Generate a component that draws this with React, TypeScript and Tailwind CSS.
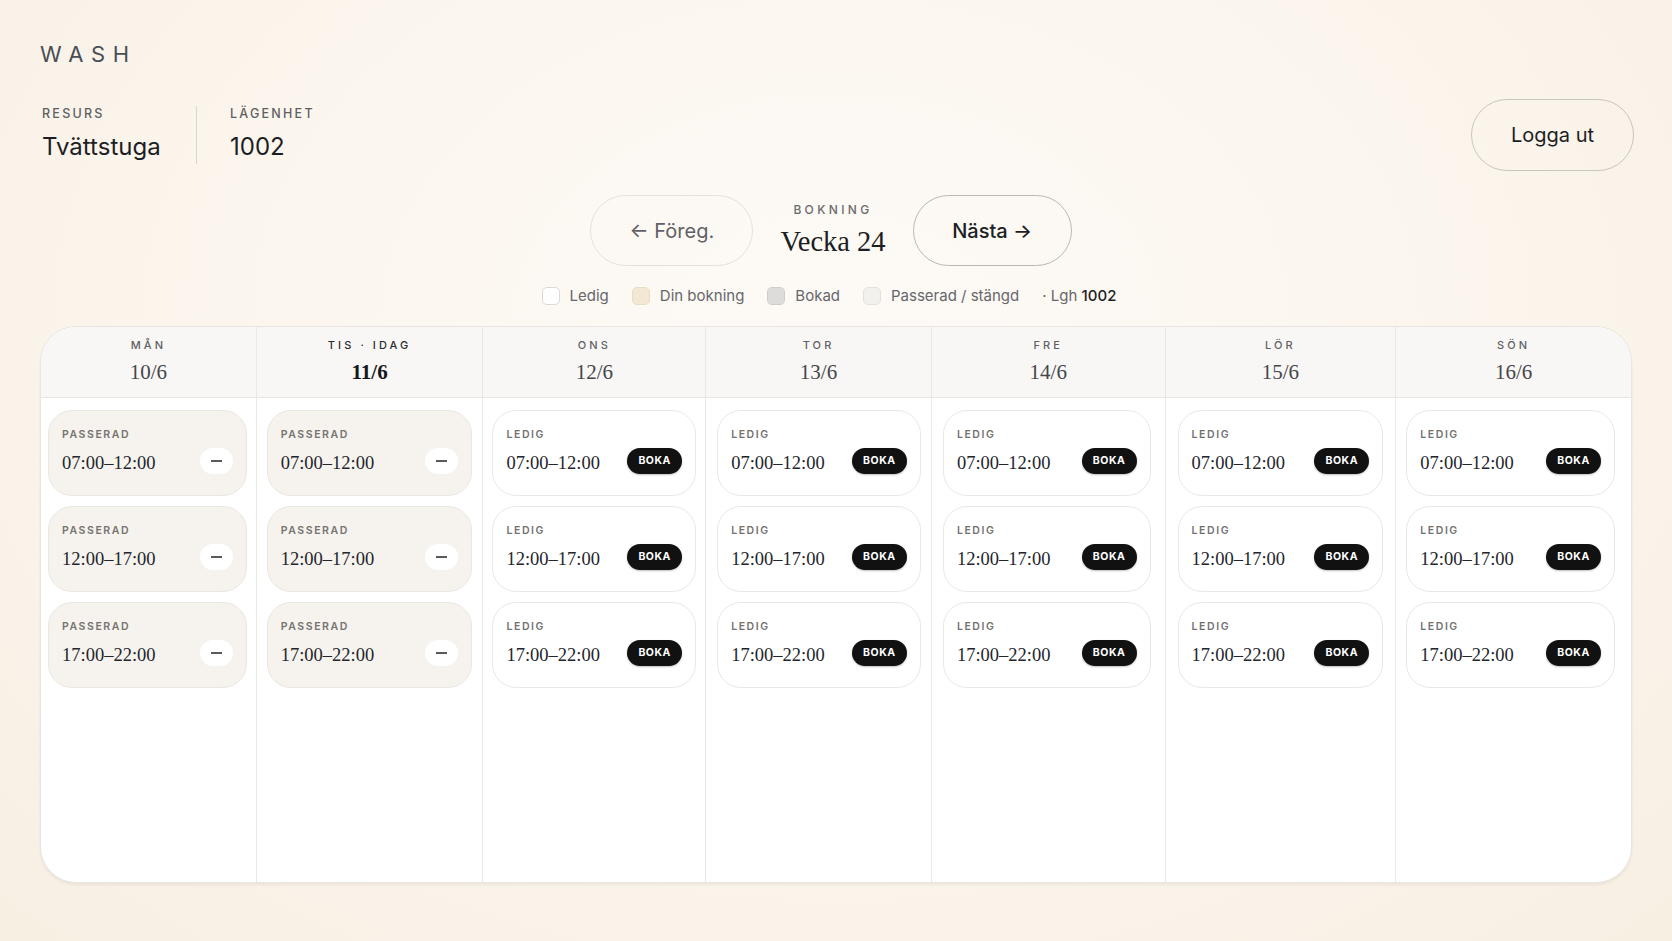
import React from "react";

type Day = {
    label: string;
    date: string;
    past: boolean;
    today?: boolean;
    pad: string; // body padding, the cards don't sit evenly in every column
};

const days: Day[] = [
    { label: "MÅN", date: "10/6", past: true, pad: "pl-[7px] pr-[9px]" },
    { label: "TIS · IDAG", date: "11/6", past: true, today: true, pad: "pl-[10px] pr-[10px]" },
    { label: "ONS", date: "12/6", past: false, pad: "pl-[9px] pr-[9px]" },
    { label: "TOR", date: "13/6", past: false, pad: "pl-[11px] pr-[10px]" },
    { label: "FRE", date: "14/6", past: false, pad: "pl-[11px] pr-[14px]" },
    { label: "LÖR", date: "15/6", past: false, pad: "pl-[12px] pr-[12px]" },
    { label: "SÖN", date: "16/6", past: false, pad: "pl-[10px] pr-[16px]" },
];

const slots = ["07:00–12:00", "12:00–17:00", "17:00–22:00"];

const sans = "font-['Inter','Liberation_Sans',sans-serif]";
const serif = "font-['Liberation_Serif','DejaVu_Serif',serif]";

const SlotCard: React.FC<{ time: string; past: boolean }> = ({ time, past }) => {
    return (
        <div
            className={`h-[86px] rounded-[24px] border px-[13px] pt-[18px] ${past
                ? "bg-[#f6f3ee] border-[#ebe6df]"
                : "bg-white border-[#ebe8e4]"
                }`}
        >
            <div className="text-[10.5px] leading-[12px] font-semibold tracking-[0.15em] text-[#74726f]">
                {past ? "PASSERAD" : "LEDIG"}
            </div>
            <div className="mt-[7px] flex h-[26px] items-center justify-between">
                <span className={`${serif} pt-[3px] text-[18.5px] leading-[26px] text-[#23252b]`}>{time}</span>
                {past ? (
                    <span className="flex h-[26px] w-[33px] items-center justify-center rounded-full bg-white">
                        <span className="h-[1.5px] w-[11px] bg-[#5a5a5e]" />
                    </span>
                ) : (
                    <button className="flex h-[26px] w-[55px] items-center justify-center rounded-full bg-[#111111] text-[10.5px] font-bold tracking-[0.05em] text-white shadow-[0_1px_2px_rgba(0,0,0,0.25)]">
                        BOKA
                    </button>
                )}
            </div>
        </div>
    );
};

const LegendItem: React.FC<{ box: string; text: string }> = ({ box, text }) => (
    <div className="flex items-center gap-[10px]">
        <span className={`h-[18px] w-[18px] rounded-[5px] border ${box}`} />
        <span>{text}</span>
    </div>
);

export default function App() {
    return (
        <div
            className={`${sans} min-h-screen bg-[radial-gradient(ellipse_at_50%_35%,#fdfaf6_0%,#fbf5ed_55%,#f8efe3_100%)] px-[40px] pt-[40px] text-[#1c1e24]`}
        >
            <div className="text-[22px] leading-[28px] tracking-[0.35em] text-[#4a4e55]">WASH</div>

            {/* resource + apartment, logout */}
            <div className="mt-[31px] flex h-[72px] items-center justify-between">
                <div className="ml-[2px] flex h-[58px] items-stretch">
                    <div className="w-[155px] border-r border-[#d9d5cf]">
                        <div className="text-[12.5px] leading-[16px] font-medium tracking-[0.18em] text-[#5d5f63]">RESURS</div>
                        <div className="mt-[10px] text-[24px] leading-[30px]">Tvättstuga</div>
                    </div>
                    <div className="pl-[33px]">
                        <div className="text-[12.5px] leading-[16px] font-medium tracking-[0.18em] text-[#5d5f63]">LÄGENHET</div>
                        <div className="mt-[10px] text-[24px] leading-[30px]">1002</div>
                    </div>
                </div>
                <button className="mr-[-2px] h-[72px] w-[163px] rounded-full border border-[#c9c5be] text-[20px] text-[#1c1e24]">
                    Logga ut
                </button>
            </div>

            {/* week navigation */}
            <div className="mt-[24px] flex items-center justify-center gap-[27px] pr-[10px]">
                <button className="h-[71px] w-[163px] rounded-full border border-[#e6e1da] text-[20px] text-[#5f6166]">
                    ← Föreg.
                </button>
                <div className="flex flex-col items-center">
                    <div className="text-[12px] leading-[16px] font-medium tracking-[0.28em] text-[#6a6b6e]">BOKNING</div>
                    <div className={`${serif} mt-[7px] text-[28.5px] leading-[34px] text-[#1c1e24]`}>Vecka 24</div>
                </div>
                <button className="h-[71px] w-[159px] rounded-full border border-[#bcb8b1] text-[20px] font-medium text-[#1c1e24]">
                    Nästa →
                </button>
            </div>

            {/* legend */}
            <div className="mt-[20px] flex h-[20px] items-center justify-center gap-[23px] pr-[14px] text-[15px] text-[#66676b]">
                <LegendItem box="bg-white border-[#dcd9d4]" text="Ledig" />
                <LegendItem box="bg-[#f4e7d4] border-[#ebdcc5]" text="Din bokning" />
                <LegendItem box="bg-[#dddcda] border-[#cfcdca]" text="Bokad" />
                <LegendItem box="bg-[#f3f1ee] border-[#e4e1dc]" text="Passerad / stängd" />
                <div>
                    · Lgh <span className="font-medium text-[#1c1e24]">1002</span>
                </div>
            </div>

            {/* calendar */}
            <div className="mt-[20px] grid h-[557px] grid-cols-[215fr_227fr_223fr_226fr_234fr_231fr_236fr] overflow-hidden rounded-[36px] border border-[#e9e6e1] bg-white shadow-[0_2px_3px_rgba(0,0,0,0.06)]">
                {days.map((day, i) => (
                    <div key={day.date} className={`flex flex-col ${i > 0 ? "border-l border-[#ebe8e4]" : ""}`}>
                        <div className="flex h-[71px] flex-col items-center border-b border-[#ebe8e4] bg-[#f8f7f6] pt-[11px]">
                            <div
                                className={`text-[11px] leading-[14px] font-medium tracking-[0.28em] ${day.today ? "text-[#2b2c30]" : "text-[#5f6064]"
                                    }`}
                            >
                                {day.label}
                            </div>
                            <div
                                className={`${serif} mt-[7px] text-[21px] leading-[26px] ${day.today ? "font-bold text-[#15171c]" : "text-[#45464a]"
                                    }`}
                            >
                                {day.date}
                            </div>
                        </div>
                        <div className={`flex flex-1 flex-col gap-[10px] pt-[12px] ${day.pad}`}>
                            {slots.map((s) => (
                                <SlotCard key={s} time={s} past={day.past} />
                            ))}
                        </div>
                    </div>
                ))}
            </div>
        </div>
    );
}
